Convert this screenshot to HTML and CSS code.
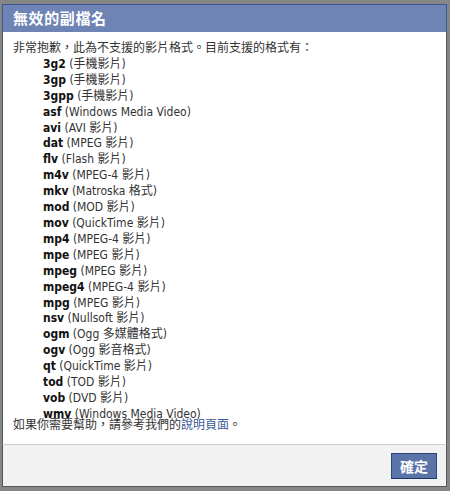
FILE: index.html
```html
<!DOCTYPE html>
<html lang="zh-Hant">
<head>
<meta charset="utf-8">
<title>無效的副檔名</title>
<link rel="stylesheet" href="styles.css">
</head>
<body>
<div class="dialog">
  <h2 class="dialog-title">無效的副檔名</h2>
  <div class="dialog-body">
    <p class="intro">非常抱歉，此為不支援的影片格式。目前支援的格式有：</p>
    <ul class="formats">
      <li><b>3g2</b> (手機影片)</li>
      <li><b>3gp</b> (手機影片)</li>
      <li><b>3gpp</b> (手機影片)</li>
      <li><b>asf</b> (Windows Media Video)</li>
      <li><b>avi</b> (AVI 影片)</li>
      <li><b>dat</b> (MPEG 影片)</li>
      <li><b>flv</b> (Flash 影片)</li>
      <li><b>m4v</b> (MPEG-4 影片)</li>
      <li><b>mkv</b> (Matroska 格式)</li>
      <li><b>mod</b> (MOD 影片)</li>
      <li><b>mov</b> (QuickTime 影片)</li>
      <li><b>mp4</b> (MPEG-4 影片)</li>
      <li><b>mpe</b> (MPEG 影片)</li>
      <li><b>mpeg</b> (MPEG 影片)</li>
      <li><b>mpeg4</b> (MPEG-4 影片)</li>
      <li><b>mpg</b> (MPEG 影片)</li>
      <li><b>nsv</b> (Nullsoft 影片)</li>
      <li><b>ogm</b> (Ogg 多媒體格式)</li>
      <li><b>ogv</b> (Ogg 影音格式)</li>
      <li><b>qt</b> (QuickTime 影片)</li>
      <li><b>tod</b> (TOD 影片)</li>
      <li><b>vob</b> (DVD 影片)</li>
      <li><b>wmv</b> (Windows Media Video)</li>
    </ul>
    <p class="help">如果你需要幫助，請參考我們的<a href="#">說明頁面</a>。</p>
  </div>
  <div class="dialog-footer">
    <button class="btn-confirm" type="button">確定</button>
  </div>
</div>
</body>
</html>
```
FILE: styles.css
```css
html, body {
  margin: 0;
  padding: 0;
  background: #868686;
}

body {
  width: 450px;
  height: 491px;
  overflow: hidden;
  font-family: "DejaVu Sans", "Noto Sans CJK TC", sans-serif;
  font-stretch: condensed;
}

.dialog {
  width: 445px;
  margin: 4px 3px 4px 2px;
  display: flex;
  flex-direction: column;
}

.dialog-title {
  margin: 0;
  height: 26px;
  padding: 0 10px 1px;
  line-height: 26px;
  background: #6d84b4;
  border: 1px solid #3b5998;
  border-bottom: none;
  color: #fff;
  font-size: 15px;
  letter-spacing: 0.6px;
  font-weight: bold;
  font-family: "Noto Sans CJK TC", sans-serif;
}

.dialog-body {
  background: #fff;
  border-left: 1px solid #555;
  border-right: 1px solid #555;
  padding: 9px 10px 10.5px;
  color: #333;
  font-size: 12px;
  line-height: 15.9px;
}

.intro {
  margin: 0;
}

.formats {
  list-style: none;
  margin: 0;
  padding: 0 0 0 30px;
}

.formats b {
  color: #111;
  font-weight: bold;
}

.help {
  margin: -5px 0 0;
}

.help a {
  color: #3b5998;
  text-decoration: none;
}

.dialog-footer {
  background: #f2f2f2;
  border-top: 1px solid #ccc;
  border-left: 1px solid #555;
  border-right: 1px solid #555;
  border-bottom: 1px solid #555;
  padding: 8px 9px 7px 10px;
  display: flex;
  justify-content: flex-end;
}

.btn-confirm {
  height: 26px;
  margin: 0;
  padding: 0 8px;
  background: #5b74a8;
  border: 1px solid #29447e;
  border-bottom-color: #1a356e;
  color: #fff;
  font-family: "Noto Sans CJK TC", sans-serif;
  font-size: 14px;
  font-weight: bold;
  line-height: 24px;
}
```
